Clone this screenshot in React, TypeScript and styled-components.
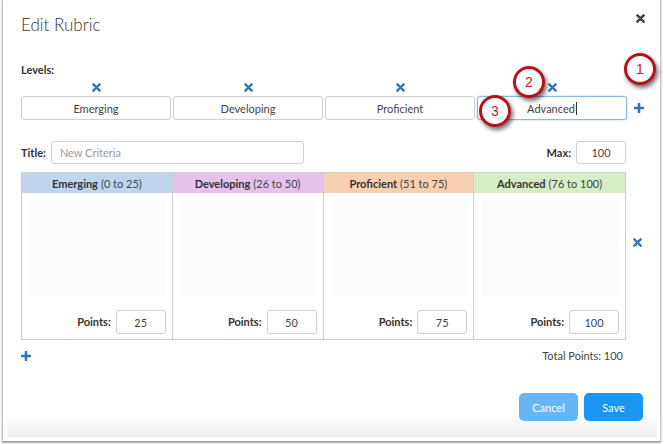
import React from 'react';
import styled, { createGlobalStyle } from 'styled-components';

const GlobalStyle = createGlobalStyle`
  html, body { margin: 0; padding: 0; background: #fff; }
  body { font-family: Lato, "Open Sans", "Liberation Sans", sans-serif; color: #333; }
  * { box-sizing: border-box; }
`;

const levels = [
  { name: 'Emerging', range: '0 to 25', color: '#bfd5ec', points: '25' },
  { name: 'Developing', range: '26 to 50', color: '#e5c2ea', points: '50' },
  { name: 'Proficient', range: '51 to 75', color: '#f8d0b0', points: '75' },
  { name: 'Advanced', range: '76 to 100', color: '#d7edc5', points: '100' },
];

const Frame = styled.div`
  position: relative;
  width: 664px;
  height: 444px;
  overflow: hidden;
`;

const Window = styled.div`
  margin-left: 2px;
  width: 659px;
  height: 442px;
  border-left: 1px solid #c6c6c6;
  border-right: 1px solid #c6c6c6;
  border-bottom: 1px solid #9a9a9a;
  box-shadow: 0 1px 2px rgba(0, 0, 0, 0.35);
  padding: 0 3px 4px 4px;
  background: #fff;
`;

const Panel = styled.div`
  height: 100%;
  display: flex;
  flex-direction: column;
`;

const Header = styled.div`
  height: 48px;
  display: flex;
  align-items: center;
  justify-content: space-between;
  padding: 0 12px 0 14px;
`;

const Heading = styled.h1`
  margin: 0;
  font-size: 17px;
  font-weight: 300;
  color: #333;
`;

const CloseButton = styled.span`
  display: inline-flex;
  line-height: 0;
  align-self: flex-start;
  margin-top: 14px;
`;

const Body = styled.div`
  padding: 0 12px 0 14px;
  display: flex;
  flex-direction: column;
`;

const Label = styled.span`
  font-size: 11px;
  font-weight: 700;
  color: #333;
  line-height: 14px;
`;

const LevelsLabel = styled(Label)`
  margin-top: 15px;
`;

const LevelsRow = styled.div`
  display: flex;
  align-items: flex-end;
  margin-top: 6px;
`;

const LevelGrid = styled.div`
  display: grid;
  grid-template-columns: repeat(4, 150px);
  column-gap: 2px;
`;

const LevelCol = styled.div`
  display: flex;
  flex-direction: column;
  align-items: center;
  gap: 4px;
`;

const Field = styled.div<{ $w?: number; $h?: number; $focused?: boolean; $placeholder?: boolean; $align?: string }>`
  width: ${(p) => (p.$w ? `${p.$w}px` : '100%')};
  height: ${(p) => p.$h ?? 24}px;
  border: 1px solid ${(p) => (p.$focused ? '#8ab8e6' : '#d0d0d0')};
  box-shadow: ${(p) => (p.$focused ? '0 0 2px rgba(80,150,220,0.5)' : 'none')};
  border-radius: 3px;
  background: #fff;
  display: flex;
  align-items: center;
  justify-content: ${(p) => p.$align ?? 'center'};
  padding: 0 8px;
  font-size: 11px;
  color: ${(p) => (p.$placeholder ? '#9a9a9a' : '#444')};
`;

const Caret = styled.span`
  display: inline-block;
  width: 1px;
  height: 13px;
  background: #333;
  margin-left: 1px;
`;

const IconButton = styled.span<{ $ml?: number; $mb?: number; $mt?: number }>`
  display: inline-flex;
  line-height: 0;
  margin-left: ${(p) => p.$ml ?? 0}px;
  margin-bottom: ${(p) => p.$mb ?? 0}px;
  margin-top: ${(p) => p.$mt ?? 0}px;
`;

const TitleRow = styled.div`
  width: 605px;
  margin-top: 21px;
  display: flex;
  align-items: center;
  gap: 5px;
`;

const Spacer = styled.div`
  flex: 1;
`;

const TableRow = styled.div`
  display: flex;
  align-items: flex-start;
  margin-top: 8px;
`;

const Table = styled.div`
  width: 605px;
  border: 1px solid #cdcdcd;
  display: grid;
  grid-template-columns: repeat(4, 1fr);
`;

const HeadCell = styled.div<{ $bg: string; $last?: boolean }>`
  height: 20px;
  background: ${(p) => p.$bg};
  border-right: ${(p) => (p.$last ? 'none' : '1px solid #cdcdcd')};
  display: flex;
  align-items: center;
  justify-content: center;
  font-size: 11px;
  color: #444;
  b { color: #333; margin-right: 3px; }
`;

const Cell = styled.div<{ $last?: boolean }>`
  border-right: ${(p) => (p.$last ? 'none' : '1px solid #cdcdcd')};
  padding: 7px 6px 5px 7px;
  display: flex;
  flex-direction: column;
`;

const Description = styled.div`
  height: 97px;
  background: #fcfcfc;
`;

const PointsRow = styled.div`
  margin-top: 13px;
  display: flex;
  align-items: center;
  justify-content: flex-end;
  gap: 5px;
`;

const TotalRow = styled.div`
  width: 605px;
  margin-top: 9px;
  display: flex;
  align-items: center;
  justify-content: space-between;
`;

const Total = styled.span`
  font-size: 11px;
  color: #444;
  margin-right: 3px;
`;

const Footer = styled.div`
  flex: 1;
  display: flex;
  align-items: flex-end;
  justify-content: flex-end;
  gap: 6px;
  padding: 0 14px 16px 0;
  background: linear-gradient(to bottom, #fff 0%, #fff 70%, #eeeeee 100%);
`;

const Button = styled.button<{ $primary?: boolean }>`
  width: 59px;
  height: 28px;
  border: none;
  border-radius: 5px;
  font-family: inherit;
  font-size: 11px;
  color: #fff;
  background: ${(p) => (p.$primary ? '#1896f0' : '#66b6f7')};
`;

const Callout = styled.div<{ $x: number; $y: number }>`
  position: absolute;
  left: ${(p) => p.$x - 16}px;
  top: ${(p) => p.$y - 16}px;
  width: 32px;
  height: 32px;
  border-radius: 50%;
  border: 3.5px solid #b81218;
  background: #fff;
  box-shadow: 2px 3px 4px rgba(0, 0, 0, 0.55);
  display: flex;
  align-items: center;
  justify-content: center;
  font-family: "Liberation Sans", Arial, sans-serif;
  font-size: 14px;
  color: #d0161c;
`;

const Times = ({ color = '#2f75bb', size = 9, w = 2.6 }: { color?: string; size?: number; w?: number }) => (
  <svg width={size} height={size} viewBox="0 0 10 10">
    <path d="M1.5 1.5 L8.5 8.5 M8.5 1.5 L1.5 8.5" stroke={color} strokeWidth={w} strokeLinecap="round" />
  </svg>
);

const Plus = ({ color = '#2f75bb' }: { color?: string }) => (
  <svg width={10} height={10} viewBox="0 0 10 10">
    <path d="M5 0.8 V9.2 M0.8 5 H9.2" stroke={color} strokeWidth={2.6} strokeLinecap="round" />
  </svg>
);

export default function App() {
  return (
    <Frame>
      <GlobalStyle />
      <Window>
        <Panel>
          <Header>
            <Heading>Edit Rubric</Heading>
            <CloseButton>
              <Times color="#444" size={9} w={2.8} />
            </CloseButton>
          </Header>

          <Body>
            <LevelsLabel>Levels:</LevelsLabel>
            <LevelsRow>
              <LevelGrid>
                {levels.map((l, i) => (
                  <LevelCol key={l.name}>
                    <Times />
                    <Field $focused={i === 3}>
                      {l.name}
                      {i === 3 && <Caret />}
                    </Field>
                  </LevelCol>
                ))}
              </LevelGrid>
              <IconButton $ml={7} $mb={7}>
                <Plus />
              </IconButton>
            </LevelsRow>

            <TitleRow>
              <Label>Title:</Label>
              <Field $w={253} $h={23} $placeholder $align="flex-start">New Criteria</Field>
              <Spacer />
              <Label>Max:</Label>
              <Field $w={50} $h={23}>100</Field>
            </TitleRow>

            <TableRow>
              <Table>
                {levels.map((l, i) => (
                  <HeadCell key={l.name} $bg={l.color} $last={i === 3}>
                    <b>{l.name}</b>({l.range})
                  </HeadCell>
                ))}
                {levels.map((l, i) => (
                  <Cell key={l.name} $last={i === 3}>
                    <Description />
                    <PointsRow>
                      <Label>Points:</Label>
                      <Field $w={50}>{l.points}</Field>
                    </PointsRow>
                  </Cell>
                ))}
              </Table>
              <IconButton $ml={7} $mt={66}>
                <Times />
              </IconButton>
            </TableRow>

            <TotalRow>
              <Plus />
              <Total>Total Points: 100</Total>
            </TotalRow>
          </Body>

          <Footer>
            <Button>Cancel</Button>
            <Button $primary>Save</Button>
          </Footer>
        </Panel>
      </Window>

      <Callout $x={640} $y={69}>1</Callout>
      <Callout $x={529} $y={82}>2</Callout>
      <Callout $x={495} $y={111}>3</Callout>
    </Frame>
  );
}
